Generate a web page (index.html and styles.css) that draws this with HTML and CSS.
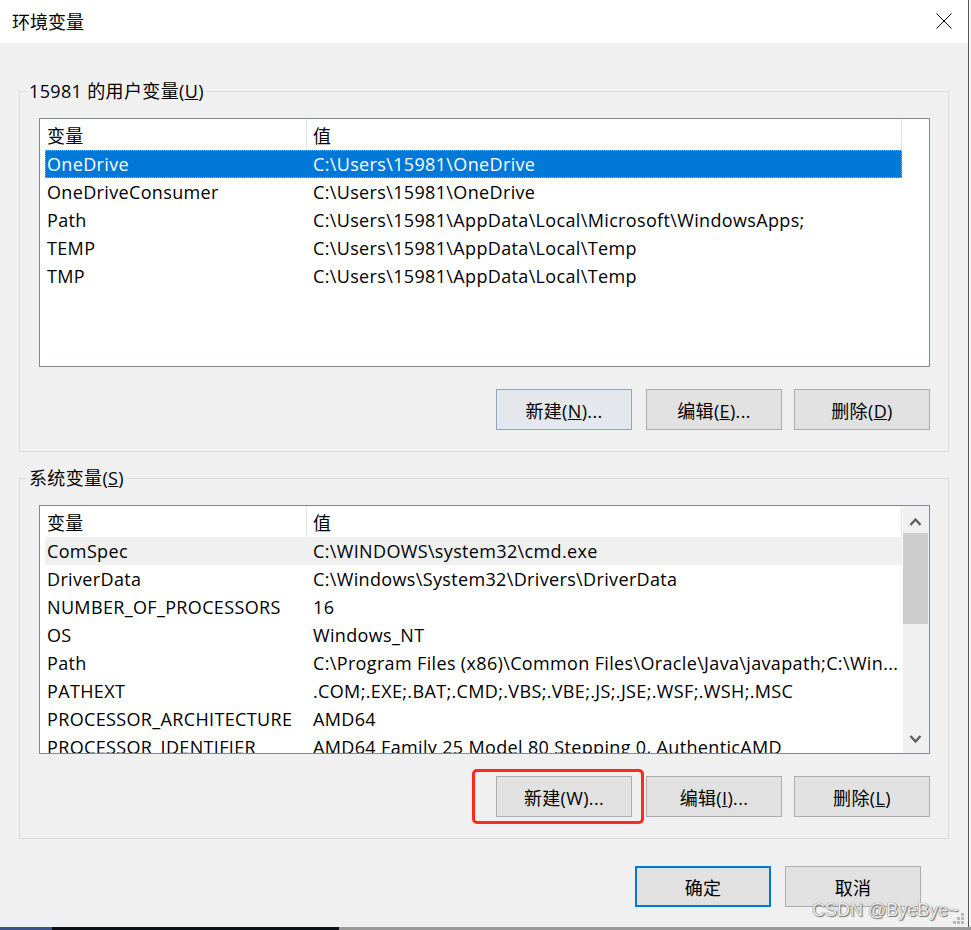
FILE: index.html
```html
<!DOCTYPE html>
<html lang="zh-CN">
<head>
    <meta charset="UTF-8">
    <meta name="viewport" content="width=device-width, initial-scale=1.0">
    <title>环境变量</title>
    <link rel="stylesheet" href="styles.css">
</head>
<body>

    <div class="screen">
        <div class="window">
            <div class="titlebar">
                <span class="title">环境变量</span>
                <svg class="close" width="16" height="16" viewBox="0 0 16 16">
                    <path d="M0.5 0.5 L15.5 15.5 M15.5 0.5 L0.5 15.5" stroke="#000" stroke-width="1" fill="none"/>
                </svg>
            </div>

            <div class="content">
                <fieldset class="group">
                    <legend>15981 的用户变量(<u>U</u>)</legend>
                    <div class="group-inner">
                        <div class="list">
                            <div class="list-main">
                                <div class="list-head">
                                    <div class="head-cell head-name">变量</div>
                                    <div class="head-cell head-value">值</div>
                                </div>
                                <div class="row selected"><span>OneDrive</span><span>C:\Users\15981\OneDrive</span></div>
                                <div class="row"><span>OneDriveConsumer</span><span>C:\Users\15981\OneDrive</span></div>
                                <div class="row"><span>Path</span><span>C:\Users\15981\AppData\Local\Microsoft\WindowsApps;</span></div>
                                <div class="row"><span>TEMP</span><span>C:\Users\15981\AppData\Local\Temp</span></div>
                                <div class="row"><span>TMP</span><span>C:\Users\15981\AppData\Local\Temp</span></div>
                            </div>
                        </div>
                        <div class="actions">
                            <button class="btn hot">新建(<u>N</u>)...</button>
                            <button class="btn">编辑(<u>E</u>)...</button>
                            <button class="btn">删除(<u>D</u>)</button>
                        </div>
                    </div>
                </fieldset>

                <fieldset class="group">
                    <legend>系统变量(<u>S</u>)</legend>
                    <div class="group-inner">
                        <div class="list">
                            <div class="list-main">
                                <div class="list-head">
                                    <div class="head-cell head-name">变量</div>
                                    <div class="head-cell head-value">值</div>
                                </div>
                                <div class="row hover"><span>ComSpec</span><span>C:\WINDOWS\system32\cmd.exe</span></div>
                                <div class="row"><span>DriverData</span><span>C:\Windows\System32\Drivers\DriverData</span></div>
                                <div class="row"><span>NUMBER_OF_PROCESSORS</span><span>16</span></div>
                                <div class="row"><span>OS</span><span>Windows_NT</span></div>
                                <div class="row"><span>Path</span><span>C:\Program Files (x86)\Common Files\Oracle\Java\javapath;C:\Win...</span></div>
                                <div class="row"><span>PATHEXT</span><span>.COM;.EXE;.BAT;.CMD;.VBS;.VBE;.JS;.JSE;.WSF;.WSH;.MSC</span></div>
                                <div class="row"><span>PROCESSOR_ARCHITECTURE</span><span>AMD64</span></div>
                                <div class="row"><span>PROCESSOR_IDENTIFIER</span><span>AMD64 Family 25 Model 80 Stepping 0, AuthenticAMD</span></div>
                            </div>
                            <div class="scrollbar">
                                <div class="sb-arrow">
                                    <svg width="26" height="26" viewBox="0 0 26 26"><polyline points="7.5,19 12.5,13.5 17.5,19" fill="none" stroke="#606060" stroke-width="2.4"/></svg>
                                </div>
                                <div class="sb-track"><div class="sb-thumb"></div></div>
                                <div class="sb-arrow">
                                    <svg width="26" height="26" viewBox="0 0 26 26"><polyline points="7.5,9 12.5,14.5 17.5,9" fill="none" stroke="#606060" stroke-width="2.4"/></svg>
                                </div>
                            </div>
                        </div>
                        <div class="actions">
                            <div class="btn-wrap">
                                <button class="btn">新建(W)...</button>
                                <div class="mark"></div>
                            </div>
                            <button class="btn">编辑(<u>I</u>)...</button>
                            <button class="btn">删除(<u>L</u>)</button>
                        </div>
                    </div>
                </fieldset>

                <div class="footer">
                    <button class="btn default">确定</button>
                    <button class="btn">取消</button>
                </div>
            </div>

            <div class="watermark">CSDN @ByeBye~</div>
            <svg class="grip" width="12" height="12" viewBox="0 0 12 12">
                <rect x="8" y="0" width="3" height="3" fill="#b8b8b8"/>
                <rect x="4" y="4" width="3" height="3" fill="#b8b8b8"/>
                <rect x="8" y="4" width="3" height="3" fill="#b8b8b8"/>
                <rect x="0" y="8" width="3" height="3" fill="#b8b8b8"/>
                <rect x="4" y="8" width="3" height="3" fill="#b8b8b8"/>
                <rect x="8" y="8" width="3" height="3" fill="#b8b8b8"/>
            </svg>
        </div>
        <div class="edge"></div>
    </div>
    <div class="taskbar"></div>

</body>
</html>
```

FILE: styles.css
```css
* {
    margin: 0;
    padding: 0;
    box-sizing: border-box;
}

body {
    width: 971px;
    height: 930px;
    overflow: hidden;
    font-family: "Open Sans", "Noto Sans CJK SC", sans-serif;
    font-size: 18px;
    letter-spacing: 0.35px;
    color: #000;
    background: #f4f4f4;
}

.screen {
    display: flex;
    height: 927px;
}

.window {
    position: relative;
    width: 968px;
    background: #f0f0f0;
}

.edge {
    width: 3px;
    border-left: 1px solid #555;
    background: #f7f7f7;
}

.taskbar {
    height: 3px;
    background: linear-gradient(90deg, #3d5190 0, #3d5190 52px, #0d1118 52px, #0d1118 339px, #9a9a9a 339px);
}

/* title bar */
.titlebar {
    height: 43px;
    background: #fff;
    display: flex;
    align-items: center;
    justify-content: space-between;
    padding: 0 16px 0 12px;
}

.title {
    line-height: 1;
    letter-spacing: 0;
}

.close {
    display: block;
    margin-top: -1px;
}

/* groups */
.content {
    padding: 36px 0 0 19px;
}

.group {
    width: 930px;
    margin: 0;
    padding: 0;
    border: 1px solid #dcdcdc;
    min-width: 0;
}

.group + .group {
    margin-top: 14px;
}

.group legend {
    margin-left: 7px;
    padding: 0 2px;
    line-height: 24px;
}

.group-inner {
    padding: 15px 18px 21px 19px;
}

/* list view */
.list {
    display: flex;
    height: 249px;
    border: 1px solid #828790;
    background: #fff;
    overflow: hidden;
}

.list-main {
    width: 863px;
    overflow: hidden;
}

.list-head {
    display: flex;
    height: 31px;
}

.head-cell {
    display: flex;
    align-items: center;
    border-right: 1px solid #e5e5e5;
}

.head-name {
    width: 267px;
    padding-left: 7px;
}

.head-value {
    width: 595px;
    padding-left: 6px;
}

.row {
    display: grid;
    grid-template-columns: 266px 1fr;
    align-items: center;
    width: 857px;
    height: 28px;
    margin-left: 5px;
    padding-left: 2px;
    white-space: nowrap;
}

.row span {
    overflow: hidden;
}

.row.selected {
    background: #0078d7;
    color: #fff;
    outline: 1px dotted #e99a52;
    outline-offset: -1px;
}

.row.hover {
    background: #f0f0f0;
}

/* scrollbar */
.scrollbar {
    width: 26px;
    display: flex;
    flex-direction: column;
    background: #f0f0f0;
}

.sb-arrow {
    height: 26px;
}

.sb-arrow svg {
    display: block;
}

.sb-track {
    flex: 1;
    padding-top: 1px;
}

.sb-thumb {
    height: 91px;
    margin-right: 1px;
    background: #cdcdcd;
}

/* buttons */
.actions {
    display: flex;
    justify-content: flex-end;
    gap: 12px;
    margin-top: 22px;
}

.actions > :first-child {
    margin-right: 2px;
}

.btn {
    width: 136px;
    height: 41px;
    border: 1px solid #adadad;
    background: #e1e1e1;
    font: inherit;
    letter-spacing: inherit;
    color: #000;
}

.btn.hot {
    border-color: #8ea6bd;
    background: #e4e7eb;
}

.btn.default {
    border: 2px solid #0078d7;
}

.btn-wrap {
    position: relative;
    display: flex;
}

.mark {
    position: absolute;
    left: -24px;
    top: -7px;
    width: 172px;
    height: 55px;
    border: 3px solid #ff2a1a;
    border-radius: 5px;
}

.footer {
    display: flex;
    justify-content: flex-end;
    gap: 14px;
    width: 930px;
    margin-top: 27px;
    padding-right: 28px;
}

.watermark {
    position: absolute;
    left: 812px;
    top: 898px;
    font-family: "Liberation Sans", Arial, sans-serif;
    font-size: 18px;
    line-height: 24px;
    letter-spacing: 0;
    color: #ececec;
    text-shadow: 0 0 1px #555, 1px 1px 1px #777;
}

.grip {
    position: absolute;
    right: 3px;
    bottom: 2px;
}
```
